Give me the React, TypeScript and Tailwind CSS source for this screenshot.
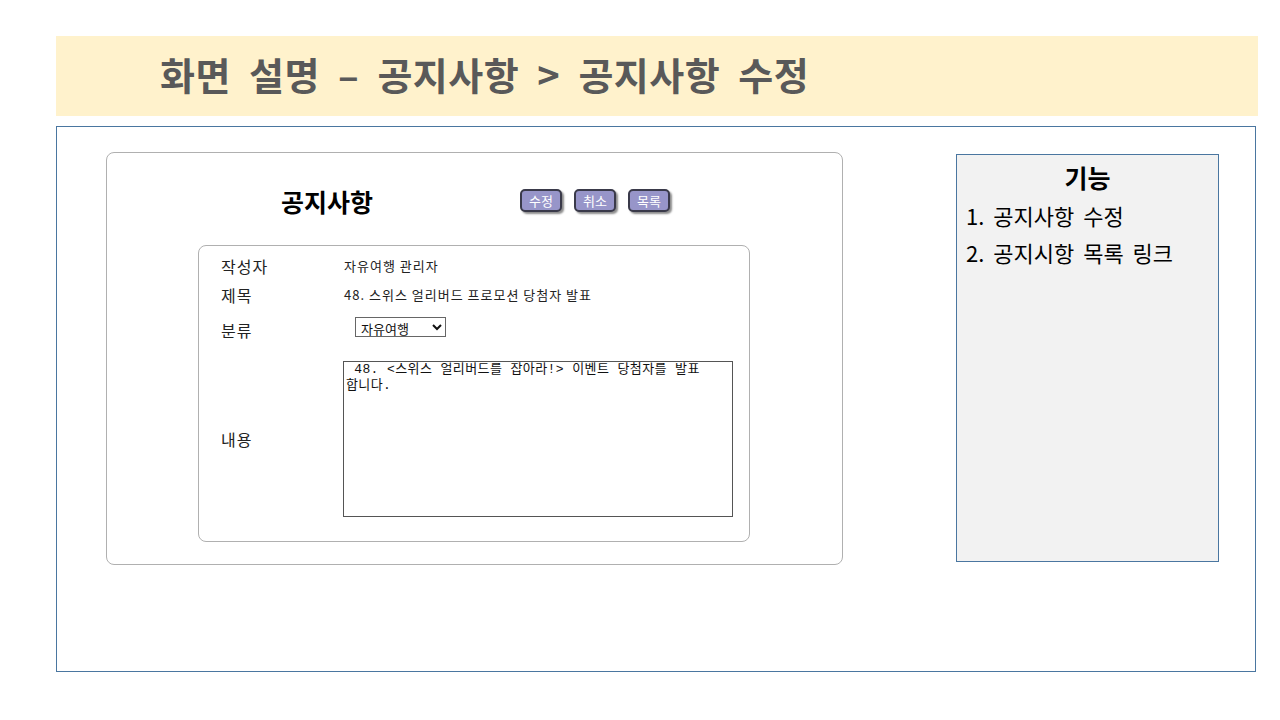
const kr = "font-['Noto_Sans_CJK_KR',sans-serif]";

function PurpleButton({ label }: { label: string }) {
  return (
    <button
      className={`h-[23px] w-[42px] rounded-[5px] border-2 border-[#3a3a4a] bg-[#9795c9] text-[13px] leading-none text-white shadow-[2px_2px_2px_rgba(0,0,0,0.45)] ${kr}`}
    >
      {label}
    </button>
  );
}

export default function App() {
  return (
    <div className={`h-[720px] w-[1280px] bg-white ${kr}`}>
      {/* page title band */}
      <div className="pt-[36px] pl-[56px] pr-[22px]">
        <div className="flex h-[80px] items-center bg-[#fff2cc] pl-[104px] pb-[6px]">
          <h1 className="text-[38px] font-bold tracking-[0.5px] [word-spacing:9px] text-[#595959]">
            화면 설명 – 공지사항 &gt; 공지사항 수정
          </h1>
        </div>
      </div>

      {/* main frame */}
      <div className="mt-[10px] ml-[56px] flex h-[546px] w-[1200px] border border-[#4a76a0] pl-[49px] pt-[25px]">
        {/* notice edit card */}
        <div className="h-[413px] w-[737px] rounded-[8px] border border-[#b0b0b0]">
          <div className="flex items-center pt-[30px] pl-[174px]">
            <h2 className="w-[239px] text-[25px] font-bold text-black">공지사항</h2>
            <div className="flex gap-[12px] pb-[2px]">
              <PurpleButton label="수정" />
              <PurpleButton label="취소" />
              <PurpleButton label="목록" />
            </div>
          </div>

          <div className="mt-[24px] ml-[91px] h-[297px] w-[552px] rounded-[8px] border border-[#b0b0b0] pl-[22px] pt-[9px]">
            <div className="flex h-[22px] items-center">
              <span className="w-[123px] text-[16px] tracking-[1px] text-[#222]">작성자</span>
              <span className="text-[13px] tracking-[1px] text-[#222]">자유여행 관리자</span>
            </div>
            <div className="mt-[7px] flex h-[22px] items-center">
              <span className="w-[123px] text-[16px] tracking-[1px] text-[#222]">제목</span>
              <span className="text-[13px] tracking-[1px] text-[#222]">48. 스위스 얼리버드 프로모션 당첨자 발표</span>
            </div>
            <div className="mt-[6px] flex items-start">
              <span className="mt-[6px] w-[123px] text-[16px] tracking-[1px] text-[#222]">분류</span>
              <select className="mt-[5px] ml-[11px] h-[20px] w-[91px] border border-[#666] bg-white px-[1px] text-[13px] leading-none text-[#111]">
                <option>자유여행</option>
              </select>
            </div>
            <div className="mt-[19px] flex items-center">
              <span className="w-[122px] text-[16px] tracking-[1px] text-[#222]">내용</span>
              <textarea
                className="h-[156px] w-[390px] resize-none border border-[#555] px-[2px] pt-0 font-['Liberation_Mono','Noto_Sans_CJK_KR',monospace] text-[13px] leading-[16px] tracking-[0.4px] break-keep text-[#111] outline-none"
                defaultValue={" 48. <스위스 얼리버드를 잡아라!> 이벤트 당첨자를 발표 합니다."}
              />
            </div>
          </div>
        </div>

        {/* function panel */}
        <div className="mt-[2px] ml-auto mr-[36px] h-[408px] w-[263px] border border-[#4a76a0] bg-[#f2f2f2] pl-[9px] pt-[4px]">
          <div className="pr-[9px] text-center text-[25px] font-bold text-black">기능</div>
          <div className="text-[22px] leading-[37px] [word-spacing:4px] text-black">1. 공지사항 수정</div>
          <div className="text-[22px] leading-[37px] [word-spacing:4px] text-black">2. 공지시항 목록 링크</div>
        </div>
      </div>
    </div>
  );
}
